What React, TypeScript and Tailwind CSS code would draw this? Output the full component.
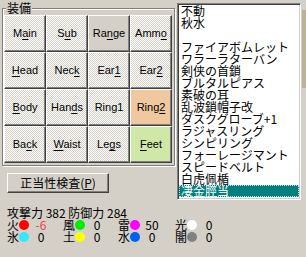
import React from "react";

type Face = "dither" | "plain" | "orange" | "green";

const slots: [string, number, Face][] = [
  ["Main", 1, "dither"],
  ["Sub", 1, "dither"],
  ["Range", 2, "plain"],
  ["Ammo", 3, "dither"],
  ["Head", 0, "dither"],
  ["Neck", 3, "dither"],
  ["Ear1", 3, "dither"],
  ["Ear2", 3, "dither"],
  ["Body", 0, "dither"],
  ["Hands", 3, "dither"],
  ["Ring1", -1, "dither"],
  ["Ring2", 4, "orange"],
  ["Back", 2, "dither"],
  ["Waist", 0, "dither"],
  ["Legs", 2, "dither"],
  ["Feet", 0, "green"],
];

const faceClass: Record<Face, string> = {
  dither:
    "bg-[image:repeating-conic-gradient(#ffffff_0_25%,#d4d0c8_0_50%)] bg-[length:2px_2px]",
  plain: "bg-[#d4d0c8]",
  orange: "bg-[#f0c8a0]",
  green: "bg-[#cfe8a8]",
};

function Mn({ t, i }: { t: string; i: number }) {
  if (i < 0) return <span>{t}</span>;
  return (
    <span>
      {t.slice(0, i)}
      <span className="underline underline-offset-[2px]">{t[i]}</span>
      {t.slice(i + 1)}
    </span>
  );
}

const items = [
  "不動",
  "秋水",
  "",
  "ファイアボムレット",
  "ワラーラターバン",
  "剣侠の首鎖",
  "ブルタルピアス",
  "素破の耳",
  "乱波鎖帽子改",
  "ダスクグローブ+1",
  "ラジャスリング",
  "シンピリング",
  "フォーレージマント",
  "スピードベルト",
  "白虎佩楯",
  "凄金脛当",
];

const elems: [string, string, string, string][] = [
  ["火", "#ff0000", "-6", "text-[#f04040]"],
  ["風", "#00ee00", "0", "text-black"],
  ["雷", "#ff00ff", "50", "text-black"],
  ["光", "#ffffff", "0", "text-black"],
  ["氷", "#30e8ff", "0", "text-black"],
  ["土", "#ffff00", "0", "text-black"],
  ["水", "#0060f0", "0", "text-black"],
  ["闇", "#808080", "0", "text-black"],
];

export default function App() {
  return (
    <div className="w-[306px] h-[257px] bg-[#d4d0c8] flex items-start overflow-hidden font-['Noto_Sans_CJK_JP',sans-serif] text-black">
      {/* left column */}
      <div className="w-[177px] flex flex-col">
        <div className="relative ml-[2px] mt-[8px] w-[173px] h-[158px] border border-[#808080] shadow-[inset_1px_1px_0_#ffffff,1px_1px_0_#ffffff] pl-[1px] pt-[6px]">
          <span className="absolute left-[3px] top-[-8px] px-[1px] bg-[#d4d0c8] text-[12px] leading-[14px]">
            装備
          </span>
          <div className="grid grid-cols-[repeat(4,42px)] grid-rows-[repeat(4,37px)]">
            {slots.map(([t, i, f]) => (
              <div
                key={t}
                className={`flex items-center justify-center border border-t-white border-l-white border-r-[#404040] border-b-[#404040] shadow-[inset_-1px_-1px_0_#808080] font-['Liberation_Sans',sans-serif] text-[11px] leading-[13px] ${faceClass[f]}`}
              >
                <Mn t={t} i={i} />
              </div>
            ))}
          </div>
        </div>

        <div className="ml-[7px] mt-[7px] w-[102px] h-[20px] flex items-center justify-center border border-t-white border-l-white border-r-[#404040] border-b-[#404040] shadow-[inset_-1px_-1px_0_#808080] text-[12px] leading-[12px]">
          <span>
            正当性検査(<span className="underline underline-offset-[1px]">P</span>)
          </span>
        </div>

        <div className="ml-[7px] mt-[14px] text-[12px] leading-[12px]">
          <div className="whitespace-nowrap">攻撃力 382 防御力 284</div>
          <div className="grid grid-cols-[56px_55px_57px_56px]">
            {elems.map(([k, c, v, vc]) => (
              <div key={k} className="flex items-center h-[12px]">
                <span className="w-[12px]">{k}</span>
                <span
                  className="w-[10px] h-[10px] rounded-full"
                  style={{ backgroundColor: c }}
                />
                <span className={`w-[24px] text-center ${vc}`}>{v}</span>
              </div>
            ))}
          </div>
        </div>
      </div>

      {/* list box */}
      <div className="mt-[3px] w-[124px] h-[197px] border border-t-[#808080] border-l-[#808080] border-r-white border-b-white shadow-[inset_1px_1px_0_#404040,inset_-1px_-1px_0_#d4d0c8] bg-white p-[1px] text-[12px] leading-[12px] [font-feature-settings:'pwid']">
        {items.map((t, idx) =>
          idx === items.length - 1 ? (
            <div
              key={idx}
              className="h-[12px] pl-[1px] bg-[#008080] text-white border border-dotted border-[#bfe0e0] leading-[10px] whitespace-nowrap"
            >
              {t}
            </div>
          ) : (
            <div key={idx} className="h-[12px] pl-[2px] whitespace-nowrap">
              {t}
            </div>
          )
        )}
      </div>

      <div className="ml-[1px] mt-[10px] w-[4px] h-[78px] bg-[#bdb299]" />
    </div>
  );
}
